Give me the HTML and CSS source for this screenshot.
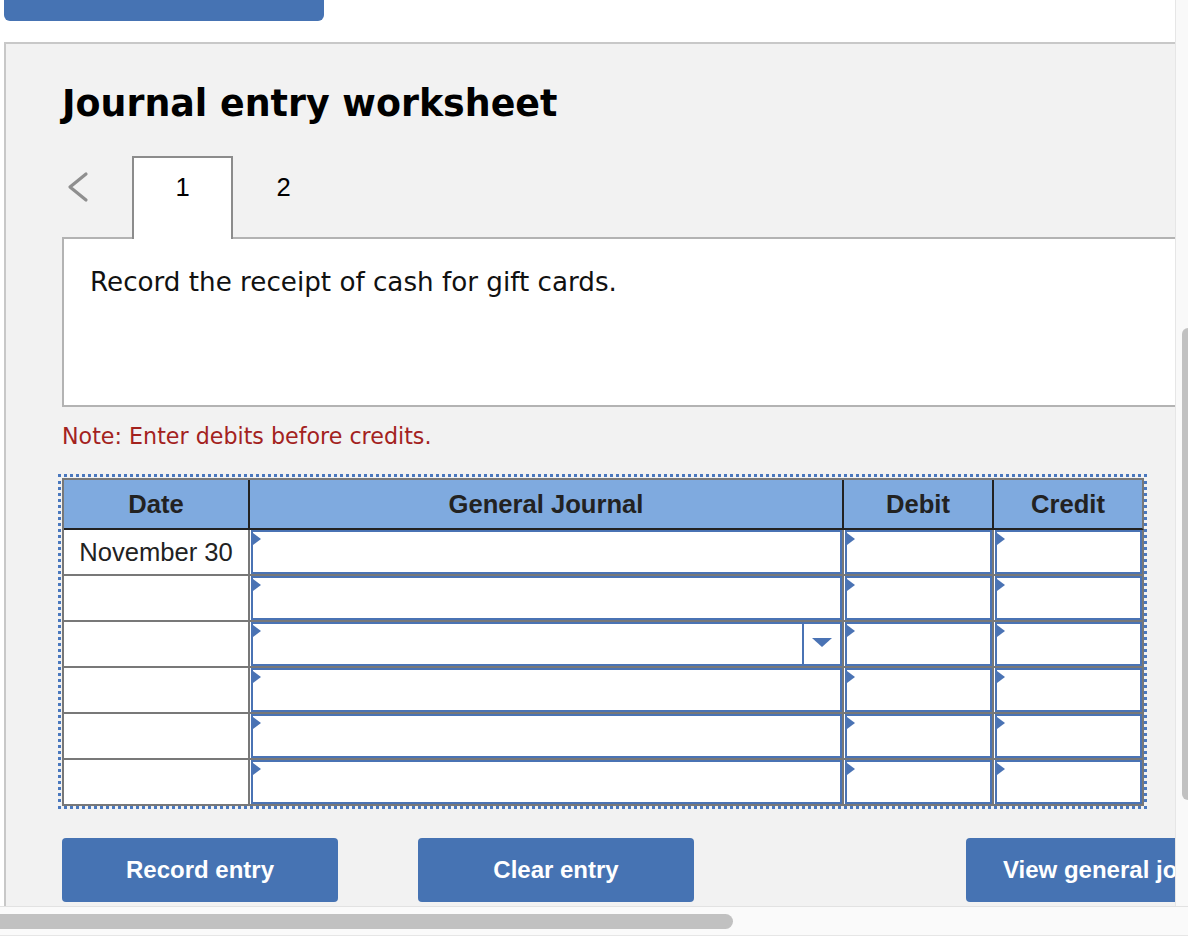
FILE: index.html
```html
<!DOCTYPE html>
<html lang="en">
<head>
<meta charset="utf-8">
<title>Journal entry worksheet</title>
<link rel="stylesheet" href="styles.css">
</head>
<body>
<div class="frame">
  <div class="viewport">
    <div class="topbar"></div>
    <section class="panel">
      <h1 class="title">Journal entry worksheet</h1>
      <div class="tabs">
        <div class="prev" aria-label="Previous">
          <svg width="22" height="32" viewBox="0 0 22 32"><polyline points="19,3 3,16 19,29" fill="none" stroke="#8f8f8f" stroke-width="3.2" stroke-linecap="round" stroke-linejoin="round"/></svg>
        </div>
        <div class="tab active">1</div>
        <div class="tab">2</div>
      </div>
      <div class="prompt">Record the receipt of cash for gift cards.</div>
      <p class="note">Note: Enter debits before credits.</p>
      <div class="sheet">
        <div class="grid">
          <div class="hcell">Date</div>
          <div class="hcell">General Journal</div>
          <div class="hcell">Debit</div>
          <div class="hcell">Credit</div>

          <div class="cell date">November 30</div>
          <div class="cell"><div class="field"></div></div>
          <div class="cell"><div class="field"></div></div>
          <div class="cell"><div class="field"></div></div>

          <div class="cell date"></div>
          <div class="cell"><div class="field"></div></div>
          <div class="cell"><div class="field"></div></div>
          <div class="cell"><div class="field"></div></div>

          <div class="cell date"></div>
          <div class="cell"><div class="field"><div class="arrow"><span class="caret"></span></div></div></div>
          <div class="cell"><div class="field"></div></div>
          <div class="cell"><div class="field"></div></div>

          <div class="cell date"></div>
          <div class="cell"><div class="field"></div></div>
          <div class="cell"><div class="field"></div></div>
          <div class="cell"><div class="field"></div></div>

          <div class="cell date"></div>
          <div class="cell"><div class="field"></div></div>
          <div class="cell"><div class="field"></div></div>
          <div class="cell"><div class="field"></div></div>

          <div class="cell date"></div>
          <div class="cell"><div class="field"></div></div>
          <div class="cell"><div class="field"></div></div>
          <div class="cell"><div class="field"></div></div>
        </div>
      </div>
      <div class="actions">
        <button class="btn">Record entry</button>
        <button class="btn">Clear entry</button>
        <button class="btn wide">View general journal</button>
      </div>
    </section>
  </div>
  <div class="vscroll"><div class="vthumb"></div></div>
  <div class="hscroll"><div class="hthumb"></div></div>
</div>
</body>
</html>
```
FILE: styles.css
```css
* { box-sizing: border-box; }
html, body { margin: 0; padding: 0; }
body {
  width: 1188px;
  height: 936px;
  overflow: hidden;
  background: #fff;
  font-family: "DejaVu Sans", Verdana, sans-serif;
}
.frame {
  display: grid;
  grid-template-columns: 1175px 13px;
  grid-template-rows: 906px 30px;
  width: 1188px;
  height: 936px;
}
.viewport {
  overflow: hidden;
  background: #fff;
}
.topbar {
  width: 320px;
  height: 21px;
  margin-left: 4px;
  background: #4673b3;
  border-radius: 0 0 6px 6px;
}
.panel {
  width: 1327px;
  min-height: 900px;
  margin: 21px 0 0 4px;
  padding: 38px 56px 40px;
  background: #f2f2f2;
  border: 2px solid #c8c8c8;
}
.title {
  margin: 0;
  font-size: 36.4px;
  line-height: 44px;
  font-weight: bold;
  color: #000;
}
.tabs {
  display: flex;
  align-items: flex-start;
  margin-top: 30px;
  margin-bottom: -2px;
}
.prev {
  width: 70px;
  height: 32px;
  margin-top: 15px;
  padding-left: 5px;
  display: flex;
}
.tab {
  width: 101px;
  height: 83px;
  padding-top: 16px;
  text-align: center;
  font-family: "Liberation Sans", Arial, sans-serif;
  font-size: 25.6px;
  line-height: 30px;
  color: #000;
}
.tab.active {
  position: relative;
  z-index: 1;
  padding-top: 14px;
  background: #fff;
  border: 2px solid #8c8c8c;
  border-bottom: none;
}
.prompt {
  height: 170px;
  padding: 28px 26px;
  background: #fff;
  border: 2px solid #b3b3b3;
  font-size: 26.2px;
  line-height: 31px;
  color: #111;
}
.note {
  margin: 16px 0 0;
  font-size: 22.2px;
  line-height: 26px;
  color: #a3221e;
}
.sheet {
  width: 1089px;
  margin: 25px 0 0 -4px;
  padding: 1px 0 0 1px;
  border: 3px dotted #4a78be;
}
.grid {
  display: grid;
  grid-template-columns: 186px 594px 150px 150px;
  width: 1082px;
  border-top: 2px solid #787878;
  border-left: 2px solid #787878;
  font-family: "Liberation Sans", Arial, sans-serif;
  color: #222;
}
.hcell {
  height: 50px;
  display: flex;
  align-items: center;
  justify-content: center;
  background: #7faadf;
  border-right: 2px solid #222;
  border-bottom: 2px solid #222;
  font-size: 25.6px;
  font-weight: bold;
}
.hcell:nth-child(4) { border-right-color: #787878; }
.cell {
  height: 46px;
  background: #fff;
  border-right: 2px solid #787878;
  border-bottom: 2px solid #787878;
}
.cell.date {
  display: flex;
  align-items: center;
  justify-content: center;
  font-size: 25.6px;
}
.field {
  position: relative;
  height: 100%;
  margin-left: 1px;
  display: flex;
  justify-content: flex-end;
  background: #fff;
  border: 2px solid #4a73b4;
}
.field::before {
  content: "";
  position: absolute;
  left: 0;
  top: 1px;
  border-left: 8px solid #4a73b4;
  border-top: 6px solid transparent;
  border-bottom: 6px solid transparent;
}
.arrow {
  width: 38px;
  display: flex;
  align-items: center;
  justify-content: center;
  padding-bottom: 3px;
  border-left: 2px solid #4a73b4;
}
.caret {
  width: 0;
  height: 0;
  border-top: 9px solid #4a73b4;
  border-left: 10px solid transparent;
  border-right: 10px solid transparent;
}
.actions {
  display: flex;
  margin-top: 29px;
}
.btn {
  width: 276px;
  height: 64px;
  padding: 0;
  border: none;
  border-radius: 4px;
  background: #4673b3;
  color: #fff;
  font-family: "Liberation Sans", Arial, sans-serif;
  font-size: 24px;
  font-weight: bold;
  white-space: nowrap;
}
.btn + .btn { margin-left: 80px; }
.btn.wide {
  width: 307px;
  margin-left: auto;
}
.vscroll {
  background: #f9f9f9;
  border-left: 1px solid #e6e6e6;
  padding: 328px 0 0 6px;
}
.vthumb {
  width: 12px;
  height: 472px;
  background: #c1c1c1;
  border-radius: 6px;
}
.hscroll {
  grid-column: 1 / span 2;
  background: #fafafa;
  border-top: 1px solid #e2e2e2;
  border-bottom: 1px solid #e6e6e6;
  padding-top: 7px;
}
.hthumb {
  width: 733px;
  height: 15px;
  background: #c1c1c1;
  border-radius: 0 8px 8px 0;
}
```
